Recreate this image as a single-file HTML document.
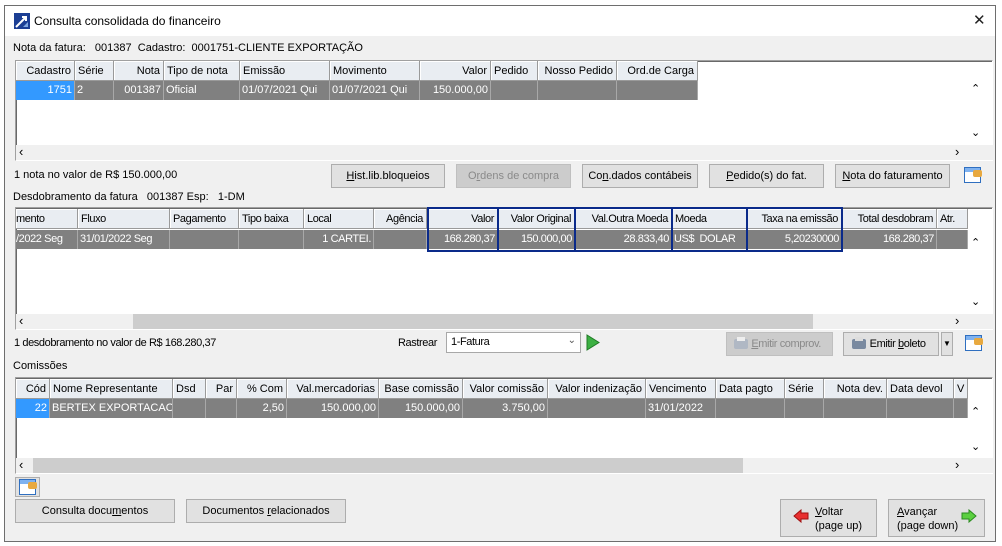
<!DOCTYPE html>
<html><head><meta charset="utf-8"><style>
*{box-sizing:border-box;margin:0;padding:0}
body{width:1002px;height:546px;background:#fff;font-family:"Liberation Sans",sans-serif;font-size:11px;color:#000;position:relative;overflow:hidden}
div{white-space:nowrap}
.a{position:absolute;white-space:nowrap}
.win{position:absolute;left:4px;top:5px;width:992px;height:537px;border:1px solid #6e6e6e;background:#f0f0f0}
.title{position:absolute;left:0;top:0;width:990px;height:30px;background:#fff}
.grid{position:absolute;background:#fff;border:1px solid #a0a0a0;border-right-color:#fff;border-bottom-color:#fff;box-shadow:inset 1px 1px 0 #696969}
.h{position:absolute;height:20px;background:#e9edf2;border-right:1px solid #9a9a9a;border-bottom:1px solid #9a9a9a;box-shadow:inset 1px 1px 0 #fff;padding:2px 3px;line-height:16px;overflow:hidden}
.c{position:absolute;height:19px;background:#808080;border-right:1px solid #a8a8a8;color:#fff;padding:2px 2px;line-height:15px;overflow:hidden}
.r{text-align:right}
.sel{background:#3399ff}
.hs{position:absolute;height:15px;background:#f0f0f0}
.th{position:absolute;height:15px;background:#cdcdcd}
.btn{position:absolute;height:24px;background:#e1e1e1;border:1px solid #adadad;text-align:center;line-height:22px}
.dis{color:#8a8a8a;background:#cccccc;border-color:#bfbfbf}
.cond{letter-spacing:-0.4px}
.blue{position:absolute;border:2px solid #0a2a8a}
.ic{position:absolute;width:17px;height:16px;border:1px solid #2f6fc0;background:linear-gradient(#7fb2f0 0 30%,#fff 30%);}
.ic:after{content:"";position:absolute;right:-2px;top:2px;width:9px;height:7px;background:#e8a940;border-radius:2px}
u{text-decoration:underline}
</style></head><body>
<div class="win">
<div class="title">
<svg class="a" style="left:9px;top:7px" width="16" height="16" viewBox="0 0 16 16"><rect width="16" height="16" fill="#1c3f94"/><path d="M2 14 L12 4 M8 4 H12 V8" stroke="#fff" stroke-width="2" fill="none"/><path d="M9 14 L14 9 V14Z" fill="#7fa7e0"/></svg>
<div class="a" style="left:29px;top:8px;font-size:12px">Consulta consolidada do financeiro</div>
<div class="a" style="left:968px;top:5px;font-size:15px;color:#222">✕</div>
</div>
</div>

<div class="a" style="left:13px;top:42px">Nota da fatura:&nbsp;&nbsp; 001387&nbsp; Cadastro:&nbsp; 0001751-CLIENTE EXPORTAÇÃO</div>

<!-- grid 1 -->
<div class="grid" style="left:15px;top:60px;width:978px;height:101px"></div>
<div class="h r" style="left:16px;top:61px;width:59px">Cadastro</div>
<div class="h" style="left:75px;top:61px;width:39px">Série</div>
<div class="h r" style="left:114px;top:61px;width:50px">Nota</div>
<div class="h" style="left:164px;top:61px;width:76px">Tipo de nota</div>
<div class="h" style="left:240px;top:61px;width:90px">Emissão</div>
<div class="h" style="left:330px;top:61px;width:90px">Movimento</div>
<div class="h r" style="left:420px;top:61px;width:71px">Valor</div>
<div class="h" style="left:491px;top:61px;width:47px">Pedido</div>
<div class="h r" style="left:538px;top:61px;width:79px">Nosso Pedido</div>
<div class="h r" style="left:617px;top:61px;width:81px">Ord.de Carga</div>
<div class="c r sel" style="left:16px;top:81px;width:59px">1751</div>
<div class="c" style="left:75px;top:81px;width:39px">2</div>
<div class="c r" style="left:114px;top:81px;width:50px">001387</div>
<div class="c" style="left:164px;top:81px;width:76px">Oficial</div>
<div class="c" style="left:240px;top:81px;width:90px">01/07/2021 Qui</div>
<div class="c" style="left:330px;top:81px;width:90px">01/07/2021 Qui</div>
<div class="c r" style="left:420px;top:81px;width:71px">150.000,00</div>
<div class="c" style="left:491px;top:81px;width:47px"></div>
<div class="c" style="left:538px;top:81px;width:79px"></div>
<div class="c" style="left:617px;top:81px;width:81px"></div>
<div class="hs" style="left:16px;top:145px;width:977px"></div>
<div class="a" style="left:19px;top:144px;font-size:13px">‹</div>
<div class="a" style="left:955px;top:144px;font-size:13px">›</div>
<div class="a" style="left:971px;top:82px;font-size:11px">⌃</div>
<div class="a" style="left:971px;top:126px;font-size:11px">⌄</div>

<div class="a" style="left:14px;top:169px">1 nota no valor de R$ 150.000,00</div>
<div class="btn" style="left:331px;top:164px;width:114px"><u>H</u>ist.lib.bloqueios</div>
<div class="btn dis" style="left:456px;top:164px;width:115px">O<u>r</u>dens de compra</div>
<div class="btn" style="left:582px;top:164px;width:116px">Co<u>n</u>.dados contábeis</div>
<div class="btn" style="left:709px;top:164px;width:115px"><u>P</u>edido(s) do fat.</div>
<div class="btn" style="left:835px;top:164px;width:115px"><u>N</u>ota do faturamento</div>
<div class="ic" style="left:964px;top:167px"></div>

<div class="a" style="left:13px;top:191px">Desdobramento da fatura&nbsp;&nbsp; 001387 Esp:&nbsp;&nbsp; 1-DM</div>

<!-- grid 2 -->
<div class="grid" style="left:15px;top:207px;width:978px;height:123px"></div>
<div class="cond">
<div class="h" style="left:16px;top:209px;width:62px;padding-left:0">mento</div>
<div class="h" style="left:78px;top:209px;width:92px">Fluxo</div>
<div class="h" style="left:170px;top:209px;width:69px">Pagamento</div>
<div class="h" style="left:239px;top:209px;width:65px">Tipo baixa</div>
<div class="h" style="left:304px;top:209px;width:70px">Local</div>
<div class="h r" style="left:374px;top:209px;width:53px">Agência</div>
<div class="h r" style="left:427px;top:209px;width:71px">Valor</div>
<div class="h r" style="left:498px;top:209px;width:77px">Valor Original</div>
<div class="h r" style="left:575px;top:209px;width:97px">Val.Outra Moeda</div>
<div class="h" style="left:672px;top:209px;width:75px">Moeda</div>
<div class="h r" style="left:747px;top:209px;width:95px">Taxa na emissão</div>
<div class="h r" style="left:842px;top:209px;width:95px">Total desdobram</div>
<div class="h" style="left:937px;top:209px;width:31px">Atr.</div>
<div class="c" style="left:16px;top:230px;width:62px;padding-left:0">/2022 Seg</div>
<div class="c" style="left:78px;top:230px;width:92px">31/01/2022 Seg</div>
<div class="c" style="left:170px;top:230px;width:69px"></div>
<div class="c" style="left:239px;top:230px;width:65px"></div>
<div class="c r" style="left:304px;top:230px;width:70px">1 CARTEI.</div>
<div class="c" style="left:374px;top:230px;width:53px"></div>
<div class="c r" style="left:427px;top:230px;width:71px">168.280,37</div>
<div class="c r" style="left:498px;top:230px;width:77px">150.000,00</div>
<div class="c r" style="left:575px;top:230px;width:97px">28.833,40</div>
<div class="c" style="left:672px;top:230px;width:75px">US$&nbsp; DOLAR</div>
<div class="c r" style="left:747px;top:230px;width:95px">5,20230000</div>
<div class="c r" style="left:842px;top:230px;width:95px">168.280,37</div>
<div class="c" style="left:937px;top:230px;width:31px"></div>
</div>
<div class="blue" style="left:427px;top:207px;width:72px;height:45px"></div>
<div class="blue" style="left:497px;top:207px;width:79px;height:45px"></div>
<div class="blue" style="left:574px;top:207px;width:99px;height:45px"></div>
<div class="blue" style="left:671px;top:207px;width:77px;height:45px"></div>
<div class="blue" style="left:746px;top:207px;width:97px;height:45px"></div>
<div class="hs" style="left:16px;top:314px;width:977px"></div>
<div class="th" style="left:133px;top:314px;width:680px"></div>
<div class="a" style="left:19px;top:313px;font-size:13px">‹</div>
<div class="a" style="left:955px;top:313px;font-size:13px">›</div>
<div class="a" style="left:971px;top:236px;font-size:11px">⌃</div>
<div class="a" style="left:971px;top:295px;font-size:11px">⌄</div>

<div class="a cond" style="left:14px;top:337px">1 desdobramento no valor de R$ 168.280,37</div>
<div class="a cond" style="left:398px;top:337px">Rastrear</div>
<div class="a" style="left:446px;top:332px;width:135px;height:21px;background:#fff;border:1px solid #a8a8a8;padding:3px 4px" ><span class="cond">1-Fatura</span><span class="a" style="right:4px;top:2px;font-size:10px;color:#555">⌄</span></div>
<svg class="a" style="left:586px;top:334px" width="14" height="17"><path d="M1 1 L13 8.5 L1 16Z" fill="#3cb043" stroke="#1f7a25"/></svg>
<div class="btn dis cond" style="left:726px;top:332px;width:107px;height:24px">&nbsp;&nbsp;&nbsp;&nbsp;&nbsp;<u>E</u>mitir comprov.</div>
<div class="btn cond" style="left:843px;top:332px;width:96px;height:24px;color:#000">&nbsp;&nbsp;&nbsp;&nbsp;&nbsp;Emitir <u>b</u>oleto</div>
<svg class="a" style="left:850px;top:337px" width="18" height="14"><rect x="2" y="2" width="14" height="10" rx="2" fill="#7a8aa0"/><rect x="5" y="0" width="8" height="4" fill="#ddd"/></svg>
<svg class="a" style="left:732px;top:337px" width="18" height="14"><rect x="2" y="2" width="14" height="10" rx="2" fill="#b0b8c4"/><rect x="5" y="0" width="8" height="4" fill="#eee"/></svg>
<div class="btn" style="left:941px;top:332px;width:12px;height:24px;font-size:8px">▼</div>
<div class="ic" style="left:965px;top:335px"></div>

<div class="a" style="left:13px;top:360px">Comissões</div>

<!-- grid 3 -->
<div class="grid" style="left:15px;top:377px;width:978px;height:97px"></div>
<div class="h r" style="left:16px;top:379px;width:34px">Cód</div>
<div class="h" style="left:50px;top:379px;width:123px">Nome Representante</div>
<div class="h" style="left:173px;top:379px;width:33px">Dsd</div>
<div class="h r" style="left:206px;top:379px;width:31px">Par</div>
<div class="h r" style="left:237px;top:379px;width:50px">% Com</div>
<div class="h r" style="left:287px;top:379px;width:92px">Val.mercadorias</div>
<div class="h r" style="left:379px;top:379px;width:84px">Base comissão</div>
<div class="h r" style="left:463px;top:379px;width:85px">Valor comissão</div>
<div class="h r" style="left:548px;top:379px;width:98px">Valor indenização</div>
<div class="h" style="left:646px;top:379px;width:70px">Vencimento</div>
<div class="h" style="left:716px;top:379px;width:69px">Data pagto</div>
<div class="h" style="left:785px;top:379px;width:39px">Série</div>
<div class="h r" style="left:824px;top:379px;width:63px">Nota dev.</div>
<div class="h" style="left:887px;top:379px;width:67px">Data devol</div>
<div class="h" style="left:954px;top:379px;width:14px">V</div>
<div class="c r sel" style="left:16px;top:399px;width:34px">22</div>
<div class="c" style="left:50px;top:399px;width:123px">BERTEX EXPORTACAO</div>
<div class="c" style="left:173px;top:399px;width:33px"></div>
<div class="c" style="left:206px;top:399px;width:31px"></div>
<div class="c r" style="left:237px;top:399px;width:50px">2,50</div>
<div class="c r" style="left:287px;top:399px;width:92px">150.000,00</div>
<div class="c r" style="left:379px;top:399px;width:84px">150.000,00</div>
<div class="c r" style="left:463px;top:399px;width:85px">3.750,00</div>
<div class="c" style="left:548px;top:399px;width:98px"></div>
<div class="c" style="left:646px;top:399px;width:70px">31/01/2022</div>
<div class="c" style="left:716px;top:399px;width:69px"></div>
<div class="c" style="left:785px;top:399px;width:39px"></div>
<div class="c" style="left:824px;top:399px;width:63px"></div>
<div class="c" style="left:887px;top:399px;width:67px"></div>
<div class="c" style="left:954px;top:399px;width:14px"></div>
<div class="hs" style="left:16px;top:458px;width:977px"></div>
<div class="th" style="left:33px;top:458px;width:710px"></div>
<div class="a" style="left:19px;top:457px;font-size:13px">‹</div>
<div class="a" style="left:955px;top:457px;font-size:13px">›</div>
<div class="a" style="left:971px;top:405px;font-size:11px">⌃</div>
<div class="a" style="left:971px;top:440px;font-size:11px">⌄</div>

<div class="a" style="left:15px;top:477px;width:25px;height:20px;background:#e1e1e1;border:1px solid #adadad"></div>
<div class="ic" style="left:19px;top:479px"></div>
<div class="btn" style="left:15px;top:499px;width:160px">Consulta docu<u>m</u>entos</div>
<div class="btn" style="left:186px;top:499px;width:160px">Documentos <u>r</u>elacionados</div>
<div class="btn" style="left:780px;top:499px;width:97px;height:38px;line-height:14px;text-align:left;padding:5px 0 0 34px"><u>V</u>oltar<br>(page up)</div>
<svg class="a" style="left:793px;top:509px" width="16" height="14"><path d="M1 7 L8 1 V4 H15 V10 H8 V13Z" fill="#e83030" stroke="#a01010"/></svg>
<div class="btn" style="left:888px;top:499px;width:97px;height:38px;line-height:14px;text-align:left;padding:5px 0 0 8px"><u>A</u>vançar<br>(page down)</div>
<svg class="a" style="left:961px;top:509px" width="16" height="14"><path d="M15 7 L8 1 V4 H1 V10 H8 V13Z" fill="#5bd040" stroke="#2a8a20"/></svg>
</body></html>
